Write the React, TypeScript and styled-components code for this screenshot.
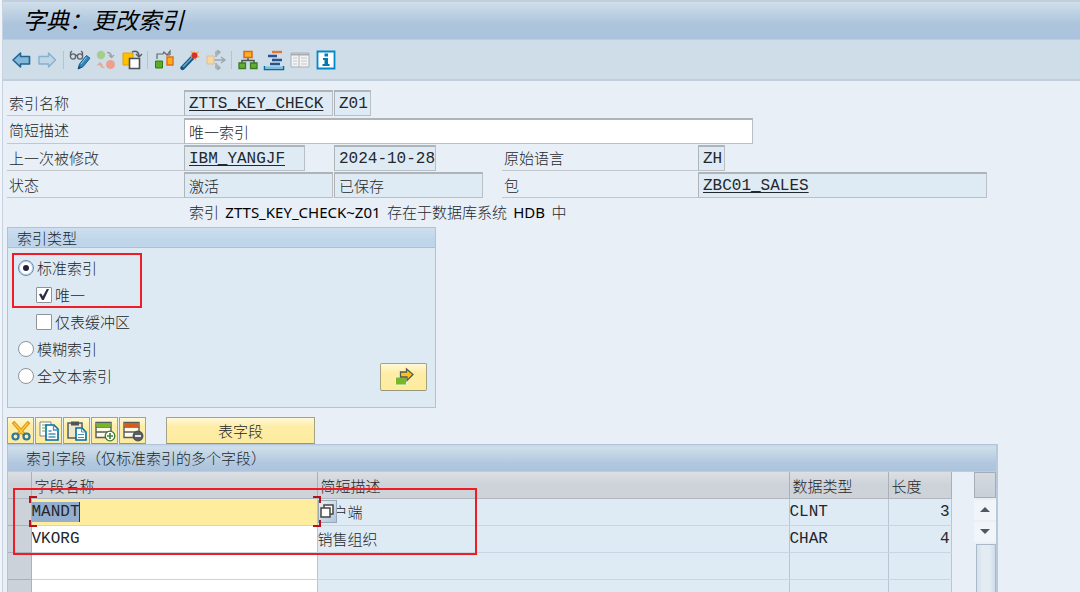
import React from "react";
import styled, { createGlobalStyle, css } from "styled-components";

const cjk = `"Noto Sans CJK SC", sans-serif`;
const mono = `"Liberation Mono", "Noto Sans CJK SC", monospace`;

const GlobalStyle = createGlobalStyle`
  *, *::before, *::after { box-sizing: border-box; }
  body {
    margin: 0;
    background: #e8eff6;
    color: #24272b;
    font: 300 15px/20px ${cjk};
  }
  button, input, a { font: inherit; color: inherit; }
`;

const Window = styled.div`
  display: flex;
  flex-direction: column;
  height: 100vh;
  overflow: hidden;
  border-left: 2px solid #f1f4f8;
  background: #e8eff6;
`;

const Frame = styled.div`
  display: flex;
  flex: 1;
  flex-direction: column;
  min-height: 0;
  border-left: 1px solid #c6d2df;
`;

const TitleBar = styled.header`
  flex: none;
  height: 40px;
  padding-left: 20px;
  border-top: 2px solid #c3cfdf;
  border-bottom: 1px solid #c0cfdf;
  background: linear-gradient(#cfdfea, #adc4dc 60%, #abc3dc);
`;

const Title = styled.h1`
  margin: 0;
  color: #000;
  font: italic 400 23px/34px ${cjk};
`;

const Toolbar = styled.nav`
  display: flex;
  flex: none;
  align-items: center;
  height: 41px;
  padding-left: 6px;
  border-bottom: 2px solid #c3cedc;
  background: #cfdde8;
`;

const ToolButton = styled.button`
  display: flex;
  align-items: center;
  justify-content: center;
  width: 26px;
  height: 26px;
  padding: 0;
  border: 0;
  background: none;
`;

const Separator = styled.span`
  width: 1px;
  height: 18px;
  margin: 0 3px 0 2px;
  background: #afc4d7;
`;

const Content = styled.main`
  display: flex;
  flex: 1;
  flex-direction: column;
  min-height: 0;
  padding: 8px 4px 0;
`;

const Form = styled.form`
  display: grid;
  grid-template-columns: 177px 150px 168px 196px auto;
  grid-template-rows: 27px 28px 27px 27px 27px;
  justify-content: start;
`;

const Label = styled.label<{ $col?: number }>`
  grid-column: ${(p) => p.$col ?? 1};
  padding: 4px 2px 0;
  border-bottom: 1px solid #c2c7cc;
`;

const Field = styled.input<{ $width: number; $link?: boolean; $cjk?: boolean; $span?: number }>`
  align-self: end;
  grid-column: span ${(p) => p.$span ?? 1};
  width: ${(p) => p.$width}px;
  height: 26px;
  padding: 0 0 0 4px;
  border: 1px solid #b9bfc4;
  border-top: 2px solid #aeb4b8;
  border-left-color: #aeb4b8;
  outline: 0;
  background: #deeaf4;
  font: ${(p) => (p.$cjk ? `300 15px/20px ${cjk}` : `400 16px/20px ${mono}`)};
  ${(p) => p.$link && css`text-decoration: underline; text-underline-offset: 2px;`}
  &:not(:read-only) { background: #fff; }
`;

const Message = styled.p`
  grid-column: 2 / -1;
  margin: 0;
  padding: 4px 5px 0;
  white-space: pre;
`;

const SystemText = styled.span`
  margin: 0 3px;
  color: #000;
  font: 400 15px/20px "Noto Sans", sans-serif;
`;

const Group = styled.section`
  position: relative;
  flex: none;
  width: 429px;
  height: 181px;
  margin-top: 2px;
  border: 1px solid #aec3d7;
  background: #deeaf3;
`;

const GroupTitle = styled.h2`
  height: 20px;
  margin: 0;
  padding: 0 9px;
  border-bottom: 1px solid #a9c0d6;
  background: linear-gradient(#cddff0, #bfd6ea 60%);
  font: 300 15px/19px ${cjk};
`;

const Options = styled.div`
  display: grid;
  grid-auto-rows: 27px;
  padding: 6px 10px 0;
`;

const Option = styled.label<{ $nested?: boolean }>`
  display: flex;
  align-items: center;
  gap: 3px;
  padding-left: ${(p) => (p.$nested ? 18 : 0)}px;
`;

const Choice = styled.input`
  appearance: none;
  display: grid;
  place-items: center;
  width: 16px;
  height: 16px;
  margin: 0;
  border: 1px solid #8f9499;
  border-radius: ${(p) => (p.type === "radio" ? "50%" : "1px")};
  background: #fff;
  &[type="radio"]:checked { border-color: #6488b4; box-shadow: inset 0 0 0 1px #bcd2e8; }
  &[type="radio"]:checked::after {
    content: "";
    width: 6px;
    height: 6px;
    border-radius: 50%;
    background: #232340;
  }
  &[type="checkbox"]:checked::after {
    content: "";
    width: 10px;
    height: 11px;
    background: #2c2c48;
    clip-path: polygon(0 48%, 22% 42%, 38% 66%, 78% 0, 100% 0, 48% 100%, 30% 100%);
  }
`;

const yellow = css`
  border: 1px solid #a6a285;
  border-bottom-color: #99967a;
  background: linear-gradient(#fff8d8, #feeda6 35%, #fdeb9e);
`;

const GoButton = styled.button`
  position: absolute;
  right: 8px;
  bottom: 16px;
  display: grid;
  place-items: center;
  width: 47px;
  height: 28px;
  padding: 0;
  border-radius: 2px;
  ${yellow}
`;

const Highlight = styled.div<{ $left: number; $top: number; $width: number; $height: number }>`
  position: absolute;
  z-index: 2;
  top: ${(p) => p.$top}px;
  left: ${(p) => p.$left}px;
  width: ${(p) => p.$width}px;
  height: ${(p) => p.$height}px;
  border: 2px solid #ee1c25;
  pointer-events: none;
`;

const Actions = styled.div`
  display: flex;
  flex: none;
  height: 27px;
  margin-top: 9px;
`;

const ActionButton = styled.button`
  display: grid;
  place-items: center;
  width: 27px;
  margin-right: 1px;
  padding: 0;
  ${yellow}
`;

const FieldsButton = styled.button`
  width: 149px;
  margin-left: 19px;
  padding: 0;
  ${yellow}
`;

const Panel = styled.section`
  position: relative;
  display: flex;
  flex: 1;
  flex-direction: column;
  width: 991px;
  min-height: 0;
  border: 1px solid #b2c3d5;
  border-right: 2px solid #b8c9da;
  border-bottom: 0;
`;

const PanelTitle = styled.h2`
  flex: none;
  height: 27px;
  margin: 0;
  padding: 0 18px;
  border-top: 2px solid #c8d9e9;
  border-bottom: 1px solid #c2cbd4;
  background: linear-gradient(#cfdfeb, #b0c7de 70%, #abc3dc);
  font: 300 15px/22px ${cjk};
`;

const PanelBody = styled.div`
  display: flex;
  flex: 1;
  justify-content: space-between;
  min-height: 0;
`;

const Grid = styled.table`
  width: 943px;
  border-collapse: collapse;
  table-layout: fixed;
  align-self: flex-start;
`;

const HeadCell = styled.th<{ $width: number }>`
  width: ${(p) => p.$width}px;
  height: 26px;
  padding: 2px 3px 0;
  border-right: 1px solid #a9b0b8;
  border-bottom: 1px solid #b1b7be;
  background: linear-gradient(#dbdfe3, #cdd2d9 50%, #ced3d9);
  font-weight: 300;
  text-align: left;
`;

const Cell = styled.td<{ $kind?: "selector" | "name" | "active"; $end?: boolean; $mono?: boolean }>`
  position: relative;
  height: 27px;
  padding: 0 1px 0 0;
  border-right: 1px solid #b8c6d3;
  border-bottom: 1px solid #c9d6e1;
  background: #deeaf4;
  text-align: ${(p) => (p.$end ? "right" : "left")};
  ${(p) => p.$mono && css`font: 400 16px/20px ${mono};`}
  ${(p) => p.$kind === "selector" && css`background: #cbd2da; border-color: #a9b2bc;`}
  ${(p) => p.$kind === "name" && css`background: #fff;`}
  ${(p) => p.$kind === "active" && css`background: #feed9f;`}
`;

const CellInput = styled.input<{ $selected?: boolean }>`
  display: block;
  width: ${(p) => (p.$selected ? "48px" : "100%")};
  height: 20px;
  padding: 0;
  border: 0;
  outline: 0;
  background: ${(p) => (p.$selected ? "#94aed0" : "transparent")};
  font: 400 16px/20px ${mono};
  ${(p) => p.$selected && css`border-right: 1px solid #333;`}
`;

const Corners = styled.svg`
  position: absolute;
  z-index: 3;
  top: -3px;
  left: -3px;
  pointer-events: none;
`;

const HelpButton = styled.button`
  position: absolute;
  z-index: 2;
  top: 1px;
  left: 0;
  display: grid;
  place-items: center;
  width: 19px;
  height: 23px;
  padding: 0;
  border: 1px solid #99a7b7;
  background: linear-gradient(135deg, #e9f1f8, #afc4dc);
`;

const ScrollColumn = styled.div`
  display: flex;
  flex-direction: column;
  width: 22px;
`;

const ScrollCorner = styled.button`
  flex: none;
  height: 26px;
  border: 1px solid #a5adb6;
  background: linear-gradient(#d4dadf, #c8cfd7);
`;

const ScrollButton = styled.button`
  display: grid;
  flex: none;
  place-items: center;
  height: 20px;
  margin-top: 2px;
  padding: 0;
  border: 0;
  background: #f1f5fa;
`;

const ScrollThumb = styled.div`
  flex: 1;
  margin: 2px 0 0 2px;
  border: 1px solid #a9b9c9;
  border-bottom: 0;
  background: linear-gradient(90deg, #d5e1ec, #e3ebf3 30% 70%, #d0ddea);
`;

const Svg = ({ children, size = 22 }: { children: React.ReactNode; size?: number }) => (
  <svg width={size} height={size} viewBox="0 0 22 22" fill="none" aria-hidden="true">{children}</svg>
);

const BackIcon = () => (
  <Svg><path d="M2 11 9.500 4v3.500h9v7.500h-9v3z" fill="#85b7d9" stroke="#1d6595" strokeWidth="1.600" strokeLinejoin="round" /></Svg>
);
const ForwardIcon = () => (
  <Svg><path d="M18.500 11 11.500 4v3.500H2v7.500h9.500v3z" fill="#bed7e8" stroke="#89b0ca" strokeWidth="1.400" strokeLinejoin="round" /></Svg>
);
const ChangeIcon = () => (
  <Svg>
    <g stroke="#5d6265" strokeWidth="1.300"><circle cx="4" cy="7.500" r="2.600" /><circle cx="11" cy="7.500" r="2.600" /><path d="M6 6.500h3M1.500 7V3.500L3 2M13.500 7V3.500L12 2" /></g>
    <path d="M9 20l1.500-5L17.500 6.500l3.500 2.700-7 8.500z" fill="#3685b8" stroke="#155d88" />
    <path d="m9 20 3.500-1.200-2.200-1.800z" fill="#174c6c" /><path d="m12 15 5.500-7" stroke="#8fc9eb" />
  </Svg>
);
const SwapIcon = () => (
  <Svg>
    <circle cx="6" cy="6" r="4.200" fill="#a3ce8b" /><circle cx="15.500" cy="15.500" r="4.500" fill="#eca18e" />
    <path d="M12 3.500c3 0 4.500 1.500 4.500 4.500m-2.500-2 2.500 2.500L19 6" stroke="#9aa3a8" strokeWidth="1.300" />
    <path d="M9.500 18.500C6.500 18.500 5 17 5 14m-2.500 2.500L5 14l2.500 2.500" stroke="#dfa79b" strokeWidth="1.300" />
  </Svg>
);
const CopyObjectIcon = () => (
  <Svg>
    <path d="M2 4h10v12H2z" fill="#ffc000" stroke="#e5a000" />
    <path d="M8.500 9.500h10v10h-10z" fill="#fff" stroke="#4c5256" strokeWidth="1.600" />
    <path d="M11 3c4-2 7 0 7 4m-3-2 3 3 3-3" stroke="#596165" strokeWidth="1.500" />
  </Svg>
);
const CheckIcon = () => (
  <Svg>
    <path d="M2.500 12h7v7h-7z" fill="#58ad24" stroke="#39781a" /><path d="M14 8h6v8h-6z" fill="#ffad19" stroke="#e46d1b" strokeWidth="1.400" />
    <path d="M4 10V5h6l1-2 3 3 3-4v4m-3 0h3" stroke="#61686d" strokeWidth="1.200" />
  </Svg>
);
const WandIcon = () => (
  <Svg>
    <path d="M3.500 19 14 8" stroke="#15557d" strokeWidth="4.400" strokeLinecap="round" /><path d="M4 18 13.500 8" stroke="#58a7d4" strokeWidth="1.700" />
    <path d="m15 1 1 3 4-2-2 4 3 2-4 1v3l-3-3-3-2 2-2-2-3 4 1z" fill="#f6aa46" /><circle cx="15.500" cy="6.500" r="2.900" fill="#d72e2e" />
  </Svg>
);
const WhereUsedIcon = () => (
  <Svg>
    <path d="M2 7h7v8H2z" fill="#f5d9a4" stroke="#e8b98d" />
    <path d="M9.500 11H20m-4-3 4 3-4 3M11 8V3h3m-2-2 3 2-3 3M11 14v5h3m-2-3 3 3-3 2" stroke="#9ba7ae" strokeWidth="1.400" />
  </Svg>
);
const HierarchyIcon = () => (
  <Svg>
    <path d="M11 8v3.500M5 14v-2.500h12V14" stroke="#4e5559" strokeWidth="1.500" />
    <path d="M7 2.500h8v6H7z" fill="#ffb31b" stroke="#df6420" strokeWidth="1.500" />
    <path d="M2 14h6.500v5.500H2zM13.500 14H20v5.500h-6.500z" fill="#63ad35" stroke="#397c22" strokeWidth="1.300" />
  </Svg>
);
const StackIcon = () => (
  <Svg>
    <path d="M9 3h10" stroke="#e07534" strokeWidth="2.400" /><path d="M5 7h9M9 11h10M7 15h10" stroke="#285391" strokeWidth="2.600" />
    <path d="M1.500 17v3.500h19V17" stroke="#006d9c" strokeWidth="1.500" /><path d="M2 18.500h18" stroke="#70bee2" strokeWidth="2" />
  </Svg>
);
const ListIcon = () => (
  <Svg>
    <path d="M2 4h18v14H2z" fill="#f2f3f4" stroke="#a9afb4" /><path d="M2 5.500h18" stroke="#a8adb2" strokeWidth="2" />
    <path d="M10 6v12" stroke="#aeb3b7" /><path d="M4 9h4m-4 3h4m-4 3h4M12 9h6m-6 3h6m-6 3h6" stroke="#c5c8cb" />
  </Svg>
);
const InfoIcon = () => (
  <Svg>
    <path d="M2.500 2.500h17v17h-17z" fill="#fff" stroke="#0089c9" strokeWidth="1.800" />
    <path d="M9.500 4.500h3.500v3H9.500zM8 9h5v6h1.500v2h-7v-2h2v-4H8z" fill="#0079b8" />
  </Svg>
);
const GoIcon = () => (
  <Svg>
    <path d="M2.500 11h11v8h-11z" fill="#76b82a" stroke="#edf5dc" />
    <path d="M7.500 6h6V3l6.500 5.500-6 6v-3.500h-6.500z" fill="#ffc20e" stroke="#555b55" strokeWidth="1.300" />
  </Svg>
);
const CutIcon = () => (
  <Svg>
    <path d="m3 2 11.500 13M19 2 7.500 15" stroke="#dc9318" strokeWidth="3.400" /><path d="m4 3 10 11.500M18 3 8 14.500" stroke="#ffca36" strokeWidth="1.500" />
    <circle cx="5.500" cy="16.500" r="3" stroke="#2c769f" strokeWidth="2.200" /><circle cx="16.500" cy="16.500" r="3" stroke="#2c769f" strokeWidth="2.200" />
  </Svg>
);
const CopyIcon = () => (
  <Svg>
    <path d="M2 2h11v14H2z" fill="#fff" stroke="#7c8589" /><path d="M4 5h5M4 8h3m-3 3h3" stroke="#71a550" />
    <path d="M8 5h8l4 4v11H8z" fill="#fff" stroke="#006da4" strokeWidth="1.600" /><path d="M15.500 5.500V10H20M10.500 11h3m-3 3h7m-7 3h7" stroke="#4794b9" strokeWidth="1.300" />
  </Svg>
);
const PasteIcon = () => (
  <Svg>
    <path d="M2 3h14v15H2z" fill="#eee6c9" stroke="#555d61" strokeWidth="1.500" /><path d="M5 1.500h8v4H5z" fill="#4c5458" />
    <path d="M10 8h6l4 4v8H10z" fill="#fff" stroke="#006da4" strokeWidth="1.600" /><path d="M15.500 8.500V12H20M12 14.500h6m-6 3h6" stroke="#4794b9" />
  </Svg>
);
const RowIcon = ({ remove }: { remove?: boolean }) => (
  <Svg>
    <path d="M2 2.500h15v15H2zM2 7h15M2 12h15" stroke="#555d61" strokeWidth="1.400" fill="#fffbe6" />
    <path d="M2.500 3h14v4h-14z" fill={remove ? "#d95a19" : "#72b62b"} />
    <circle cx="16" cy="16" r="4.800" fill={remove ? "#5b5f62" : "#fff"} stroke={remove ? "#4c5155" : "#3c763a"} strokeWidth="1.300" />
    <path d={remove ? "M13 16h6" : "M13 16h6M16 13v6"} stroke={remove ? "#fff" : "#408b37"} strokeWidth="1.700" />
  </Svg>
);
const Triangle = ({ down }: { down?: boolean }) => (
  <svg width="10" height="6" viewBox="0 0 10 6" aria-hidden="true"><path d={down ? "M0 0h10L5 5z" : "M0 5h10L5 0z"} fill="#4c5a68" /></svg>
);

const toolGroups = [
  [["返回", BackIcon], ["前进", ForwardIcon]],
  [["显示/更改", ChangeIcon], ["激活状态", SwapIcon], ["其他对象", CopyObjectIcon]],
  [["检查", CheckIcon], ["激活", WandIcon], ["使用位置", WhereUsedIcon]],
  [["层次", HierarchyIcon], ["对象列表", StackIcon], ["导航窗口", ListIcon], ["帮助", InfoIcon]],
] as [string, () => React.ReactElement][][];

const rows = [
  { name: "MANDT", text: "客户端", type: "CLNT", length: "3" },
  { name: "VKORG", text: "销售组织", type: "CHAR", length: "4" },
  { name: "", text: "", type: "", length: "" },
  { name: "", text: "", type: "", length: "" },
];

export default function App() {
  return (
    <Window>
      <GlobalStyle />
      <Frame>
        <TitleBar><Title>字典：更改索引</Title></TitleBar>
        <Toolbar>
          {toolGroups.map((group, i) => (
            <React.Fragment key={i}>
              {i > 0 && <Separator />}
              {group.map(([label, Icon]) => (
                <ToolButton key={label} type="button" aria-label={label}><Icon /></ToolButton>
              ))}
            </React.Fragment>
          ))}
        </Toolbar>
        <Content>
          <Form>
            <Label htmlFor="index">索引名称</Label>
            <Field id="index" $width={149} $link readOnly defaultValue="ZTTS_KEY_CHECK" />
            <Field aria-label="索引标识" $width={37} readOnly defaultValue="Z01" />
            <Label htmlFor="text">简短描述</Label>
            <Field id="text" $width={569} $cjk $span={4} defaultValue="唯一索引" />
            <Label htmlFor="user">上一次被修改</Label>
            <Field id="user" $width={121} $link readOnly defaultValue="IBM_YANGJF" />
            <Field aria-label="修改日期" $width={102} readOnly defaultValue="2024-10-28" />
            <Label htmlFor="lang" $col={4}>原始语言</Label>
            <Field id="lang" $width={27} readOnly defaultValue="ZH" />
            <Label htmlFor="status">状态</Label>
            <Field id="status" $width={149} $cjk readOnly defaultValue="激活" />
            <Field aria-label="保存状态" $width={149} $cjk readOnly defaultValue="已保存" />
            <Label htmlFor="package" $col={4}>包</Label>
            <Field id="package" $width={289} $link readOnly defaultValue="ZBC01_SALES" />
            <Message>索引 <SystemText>ZTTS_KEY_CHECK~Z01</SystemText> 存在于数据库系统 <SystemText>HDB</SystemText> 中</Message>
          </Form>

          <Group>
            <GroupTitle>索引类型</GroupTitle>
            <Options>
              <Option><Choice type="radio" name="kind" defaultChecked />标准索引</Option>
              <Option $nested><Choice type="checkbox" defaultChecked />唯一</Option>
              <Option $nested><Choice type="checkbox" />仅表缓冲区</Option>
              <Option><Choice type="radio" name="kind" />模糊索引</Option>
              <Option><Choice type="radio" name="kind" />全文本索引</Option>
            </Options>
            <GoButton type="button" aria-label="继续"><GoIcon /></GoButton>
            <Highlight $left={4} $top={25} $width={130} $height={55} />
          </Group>

          <Actions>
            <ActionButton type="button" aria-label="剪切"><CutIcon /></ActionButton>
            <ActionButton type="button" aria-label="复制"><CopyIcon /></ActionButton>
            <ActionButton type="button" aria-label="粘贴"><PasteIcon /></ActionButton>
            <ActionButton type="button" aria-label="插入行"><RowIcon /></ActionButton>
            <ActionButton type="button" aria-label="删除行"><RowIcon remove /></ActionButton>
            <FieldsButton type="button">表字段</FieldsButton>
          </Actions>

          <Panel>
            <PanelTitle>索引字段（仅标准索引的多个字段）</PanelTitle>
            <PanelBody>
              <Grid>
                <thead>
                  <tr>
                    <HeadCell $width={23} aria-label="选择" />
                    <HeadCell $width={286}>字段名称</HeadCell>
                    <HeadCell $width={472}>简短描述</HeadCell>
                    <HeadCell $width={99}>数据类型</HeadCell>
                    <HeadCell $width={63}>长度</HeadCell>
                  </tr>
                </thead>
                <tbody>
                  {rows.map((row, i) => (
                    <tr key={i}>
                      <Cell $kind="selector" />
                      <Cell $kind={i === 0 ? "active" : "name"}>
                        <CellInput aria-label="字段名称" $selected={i === 0} defaultValue={row.name} />
                        {i === 0 && (
                          <Corners width="292" height="31" viewBox="0 0 292 31" fill="none" stroke="#b5121b" strokeWidth="2">
                            <path d="M8 1H1v6M284 1h7v6M8 30H1v-6M284 30h7v-6" />
                          </Corners>
                        )}
                      </Cell>
                      <Cell>
                        {row.text}
                        {i === 0 && (
                          <HelpButton type="button" aria-label="搜索帮助">
                            <svg width="16" height="16" viewBox="0 0 16 16" fill="#fff" stroke="#484542" strokeWidth="1.500" aria-hidden="true">
                              <path d="M5 2h9v9H5z" /><path d="M2 5h9v9H2z" />
                            </svg>
                          </HelpButton>
                        )}
                      </Cell>
                      <Cell $mono>{row.type}</Cell>
                      <Cell $mono $end>{row.length}</Cell>
                    </tr>
                  ))}
                </tbody>
              </Grid>
              <ScrollColumn>
                <ScrollCorner type="button" aria-label="表格设置" />
                <ScrollButton type="button" aria-label="向上滚动"><Triangle /></ScrollButton>
                <ScrollButton type="button" aria-label="向下滚动"><Triangle down /></ScrollButton>
                <ScrollThumb />
              </ScrollColumn>
            </PanelBody>
            <Highlight $left={5} $top={43} $width={464} $height={67} />
          </Panel>
        </Content>
      </Frame>
    </Window>
  );
}
